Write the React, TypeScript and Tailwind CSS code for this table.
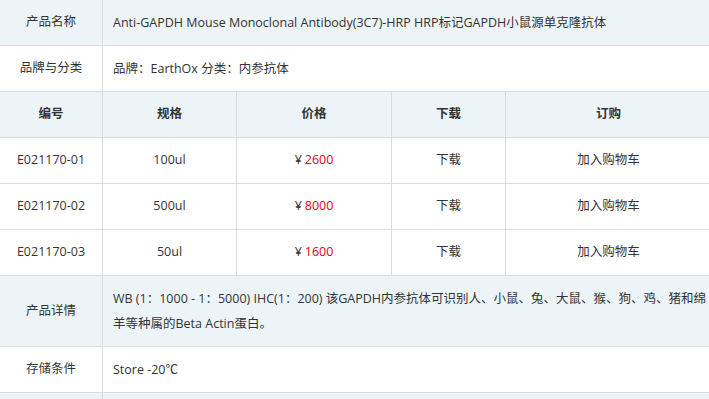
import type { ReactNode } from "react"

const font = { fontFamily: "'Open Sans', 'Noto Sans CJK SC', sans-serif" }

interface Variant {
  id: string
  size: string
  price: string
}

const variants: Variant[] = [
  { id: "E021170-01", size: "100ul", price: "2600" },
  { id: "E021170-02", size: "500ul", price: "8000" },
  { id: "E021170-03", size: "50ul", price: "1600" },
]

function Label({ children }: { children?: ReactNode }) {
  return (
    <div className="flex w-[103px] shrink-0 items-center justify-center border-r border-[#dcdcdc]">
      {children}
    </div>
  )
}

function InfoRow({ label, children, blue, tall }: { label?: string; children?: ReactNode; blue?: boolean; tall?: boolean }) {
  return (
    <div
      className={`flex border-b border-[#dcdcdc] ${tall ? "h-[71px]" : "h-[46px]"} ${blue ? "bg-[#edf4f8]" : "bg-white"}`}
    >
      <Label>{label}</Label>
      <div className="flex flex-1 items-center whitespace-nowrap px-[10px] leading-[25px]">
        <div>{children}</div>
      </div>
    </div>
  )
}

export default function App() {
  return (
    <div className="h-[399px] w-full overflow-hidden bg-white text-[12.5px] text-[#333]" style={font}>
      <div className="w-[711px]">
        <InfoRow label="产品名称" blue>
          Anti-GAPDH Mouse Monoclonal Antibody(3C7)-HRP HRP标记GAPDH小鼠源单克隆抗体
        </InfoRow>
        <InfoRow label="品牌与分类">品牌：EarthOx 分类：内参抗体</InfoRow>

        {/* variant table */}
        <div className="flex h-[46px] border-b border-[#dcdcdc] bg-[#edf4f8] font-bold">
          <Label>编号</Label>
          <div className="flex w-[134px] items-center justify-center border-r border-[#dcdcdc]">规格</div>
          <div className="flex w-[155px] items-center justify-center border-r border-[#dcdcdc]">价格</div>
          <div className="flex w-[114px] items-center justify-center border-r border-[#dcdcdc]">下载</div>
          <div className="flex flex-1 items-center justify-center">订购</div>
        </div>
        {variants.map((v) => (
          <div key={v.id} className="flex h-[46px] border-b border-[#dcdcdc] bg-white">
            <Label>{v.id}</Label>
            <div className="flex w-[134px] items-center justify-center border-r border-[#dcdcdc]">{v.size}</div>
            <div className="flex w-[155px] items-center justify-center border-r border-[#dcdcdc]">
              ¥<span className="ml-[3px] text-[#e60012]">{v.price}</span>
            </div>
            <div className="flex w-[114px] items-center justify-center border-r border-[#dcdcdc]">下载</div>
            <div className="flex flex-1 items-center justify-center">加入购物车</div>
          </div>
        ))}

        <InfoRow label="产品详情" blue tall>
          WB (1：1000 - 1：5000) IHC(1：200) 该GAPDH内参抗体可识别人、小鼠、兔、大鼠、猴、狗、鸡、猪和绵
          <br />
          羊等种属的Beta Actin蛋白。
        </InfoRow>
        <InfoRow label="存储条件">Store -20℃</InfoRow>
        <InfoRow blue />
      </div>
    </div>
  )
}
